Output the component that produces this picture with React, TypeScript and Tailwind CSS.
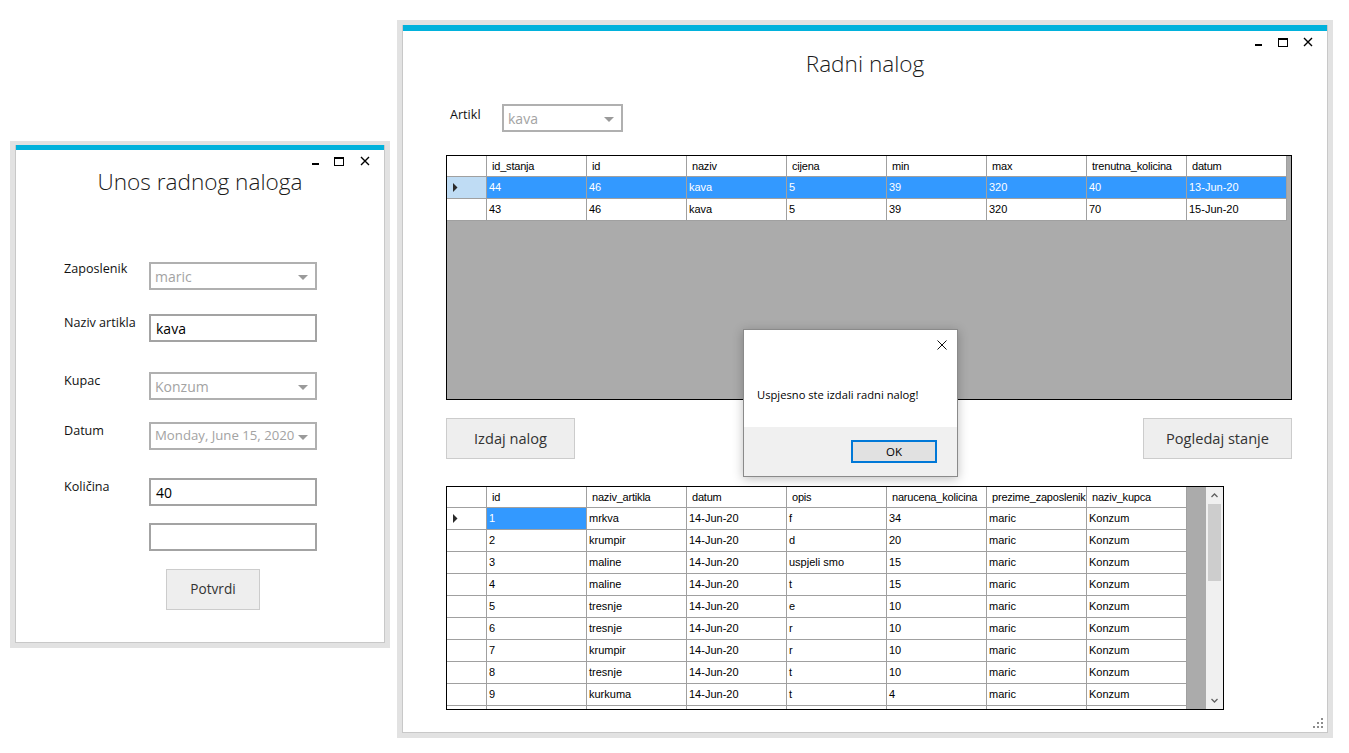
import React from "react";

const ui = "font-['Open_Sans',sans-serif]";
const mono = "font-['Liberation_Sans',Arial,sans-serif]";

function WinControls({ gapA, gapB }: { gapA: string; gapB: string }) {
  return (
    <div className="flex h-[10px] items-end justify-end pr-[14px]">
      <div className="mb-[1px] h-[2px] w-[7px] bg-black" />
      <div className={`h-[9px] w-[10px] border border-t-2 border-black ${gapA}`} />
      <svg className={gapB} width="10" height="10" viewBox="0 0 10 10">
        <path d="M1 1 L9 9 M9 1 L1 9" stroke="#000" strokeWidth="1.4" />
      </svg>
    </div>
  );
}

function Arrow() {
  return (
    <svg width="10" height="5" viewBox="0 0 10 5" className="absolute right-[7px] top-[11px]">
      <polygon points="0,0 10,0 5,5" fill="#9a9a9a" />
    </svg>
  );
}

function Combo({ text, size }: { text: string; size: string }) {
  return (
    <div className={`relative flex items-center overflow-hidden whitespace-nowrap border-2 border-[#b0b0b0] bg-white pl-[4px] text-[#a3a3a3] ${size}`}>
      {text}
      <Arrow />
    </div>
  );
}

function TextBox({ text }: { text?: string }) {
  return (
    <div className="flex h-[28px] w-[168px] items-center border-2 border-[#a3a3a3] bg-white pl-[5px] text-[14px] text-black">
      {text}
    </div>
  );
}

function Row({ label, labelPos, gap, children }: { label: string; labelPos: string; gap: string; children: React.ReactNode }) {
  return (
    <div className={`flex items-start pl-[48px] ${gap}`}>
      <div className={`w-[85px] text-[12.6px] leading-[18px] text-[#111] ${labelPos}`}>{label}</div>
      {children}
    </div>
  );
}

function Triangle() {
  return (
    <svg width="5" height="9" viewBox="0 0 5 9">
      <polygon points="0,0 4.5,4.5 0,9" fill="#2a2a2a" />
    </svg>
  );
}

type GridProps = {
  columns: string[];
  data: string[][];
  selectedRow?: number;
  selectedCell?: number;
  size: string;
  scroll?: boolean;
};

function Grid({ columns, data, selectedRow, selectedCell, size, scroll }: GridProps) {
  return (
    <div className={`flex overflow-hidden border border-black bg-[#ababab] text-[11px] ${mono} ${size}`}>
      <div className="flex flex-col">
        <div className="flex h-[21px] shrink-0">
          <div className="w-[40px] border-r border-b border-[#a0a0a0] bg-white" />
          {columns.map((c) => (
            <div key={c} className="flex w-[100px] items-center whitespace-nowrap border-r border-b border-[#a0a0a0] bg-white pl-[5px] tracking-[-0.2px] text-black">
              {c}
            </div>
          ))}
        </div>
        {data.map((row, i) => (
          <div key={i} className="flex h-[22px] shrink-0">
            <div className={`flex w-[40px] items-center border-r border-b border-[#a0a0a0] pl-[6px] ${i === selectedRow ? "bg-[#bfdcf4]" : "bg-white"}`}>
              {i === 0 && <Triangle />}
            </div>
            {row.map((v, j) => {
              const sel = i === selectedRow || (i === 0 && j === selectedCell);
              return (
                <div
                  key={j}
                  className={`flex w-[100px] items-center whitespace-nowrap border-r border-b border-[#a0a0a0] pl-[2px] ${sel ? "bg-[#3399ff] text-white" : "bg-white text-black"}`}
                >
                  {v}
                </div>
              );
            })}
          </div>
        ))}
      </div>
      {scroll && (
        <div className="ml-auto flex w-[17px] shrink-0 flex-col bg-[#f0f0f0]">
          <div className="flex h-[17px] items-center justify-center">
            <svg width="7" height="5" viewBox="0 0 7 5">
              <path d="M0.5 4 L3.5 1 L6.5 4" stroke="#606060" strokeWidth="1.3" fill="none" />
            </svg>
          </div>
          <div className="flex-1 px-[2px]">
            <div className="h-[77px] bg-[#cdcdcd]" />
          </div>
          <div className="flex h-[17px] items-center justify-center">
            <svg width="7" height="5" viewBox="0 0 7 5">
              <path d="M0.5 1 L3.5 4 L6.5 1" stroke="#606060" strokeWidth="1.3" fill="none" />
            </svg>
          </div>
        </div>
      )}
    </div>
  );
}

const upperCols = ["id_stanja", "id", "naziv", "cijena", "min", "max", "trenutna_kolicina", "datum"];
const upperData = [
  ["44", "46", "kava", "5", "39", "320", "40", "13-Jun-20"],
  ["43", "46", "kava", "5", "39", "320", "70", "15-Jun-20"],
];

const lowerCols = ["id", "naziv_artikla", "datum", "opis", "narucena_kolicina", "prezime_zaposlenik", "naziv_kupca"];
const lowerData = [
  ["1", "mrkva", "14-Jun-20", "f", "34", "maric", "Konzum"],
  ["2", "krumpir", "14-Jun-20", "d", "20", "maric", "Konzum"],
  ["3", "maline", "14-Jun-20", "uspjeli smo", "15", "maric", "Konzum"],
  ["4", "maline", "14-Jun-20", "t", "15", "maric", "Konzum"],
  ["5", "tresnje", "14-Jun-20", "e", "10", "maric", "Konzum"],
  ["6", "tresnje", "14-Jun-20", "r", "10", "maric", "Konzum"],
  ["7", "krumpir", "14-Jun-20", "r", "10", "maric", "Konzum"],
  ["8", "tresnje", "14-Jun-20", "t", "10", "maric", "Konzum"],
  ["9", "kurkuma", "14-Jun-20", "t", "4", "maric", "Konzum"],
  ["", "", "", "", "", "", ""],
];

function LeftWindow() {
  return (
    <div className="absolute left-[10px] top-[141px] h-[507px] w-[380px] bg-[#e2e2e2] px-[5px] pt-[4px] pb-[5px]">
      <div className="flex h-full flex-col border-x border-b border-[#c8c8c8] bg-white">
        <div className="h-[5px] bg-[#01b2dc]" />
        <div className="mt-[6px]">
          <WinControls gapA="ml-[15px]" gapB="ml-[16px]" />
        </div>
        <div className="text-center text-[22.6px] font-light leading-[32px] text-[#1a1a1a]">Unos radnog naloga</div>
        <Row label="Zaposlenik" labelPos="-mt-[2px]" gap="mt-[64px]">
          <Combo text="maric" size="h-[28px] w-[168px] text-[14px]" />
        </Row>
        <Row label="Naziv artikla" labelPos="mt-0" gap="mt-[24px]">
          <TextBox text="kava" />
        </Row>
        <Row label="Kupac" labelPos="mt-0" gap="mt-[30px]">
          <Combo text="Konzum" size="h-[28px] w-[168px] text-[14px]" />
        </Row>
        <Row label="Datum" labelPos="mt-0" gap="mt-[22px]">
          <Combo text="Monday, June 15, 2020" size="h-[28px] w-[168px] text-[13.2px]" />
        </Row>
        <Row label="Količina" labelPos="mt-0" gap="mt-[28px]">
          <TextBox text="40" />
        </Row>
        <Row label="" labelPos="mt-0" gap="mt-[17px]">
          <TextBox />
        </Row>
        <div className="ml-[150px] mt-[18px] flex h-[41px] w-[94px] items-center justify-center border border-[#cccccc] bg-[#eeeeee] text-[13.6px] text-[#333]">
          Potvrdi
        </div>
      </div>
    </div>
  );
}

function RightWindow() {
  return (
    <div className="absolute left-[397px] top-[20px] h-[718px] w-[936px] bg-[#e2e2e2] p-[5px]">
      <div className="relative flex h-full flex-col border-x border-b border-[#c8c8c8] bg-white">
        <div className="h-[6px] bg-[#01b2dc]" />
        <div className="mt-[6px]">
          <WinControls gapA="ml-[16px]" gapB="ml-[15px]" />
        </div>
        <div className="mt-[1px] text-center text-[22.6px] font-light leading-[32px] text-[#1a1a1a]">Radni nalog</div>
        <div className="ml-[47px] mt-[24px] flex items-start">
          <div className="mt-[2px] w-[52px] text-[12.6px] leading-[18px] text-[#111]">Artikl</div>
          <Combo text="kava" size="h-[28px] w-[121px] text-[14px]" />
        </div>
        <div className="ml-[43px] mt-[23px]">
          <Grid columns={upperCols} data={upperData} selectedRow={0} size="h-[245px] w-[846px]" />
        </div>
        <div className="ml-[43px] mr-[35px] mt-[18px] flex justify-between">
          <div className="flex h-[41px] w-[129px] items-center justify-center border border-[#cccccc] bg-[#eeeeee] text-[14.6px] text-[#333]">
            Izdaj nalog
          </div>
          <div className="flex h-[41px] w-[149px] items-center justify-center border border-[#cccccc] bg-[#eeeeee] text-[14.6px] text-[#333]">
            Pogledaj stanje
          </div>
        </div>
        <div className="ml-[43px] mt-[27px]">
          <Grid columns={lowerCols} data={lowerData} selectedCell={0} size="h-[224px] w-[778px]" scroll />
        </div>
        <svg className="absolute bottom-[4px] right-[4px]" width="10" height="10" viewBox="0 0 10 10">
          <rect x="8" y="0" width="2" height="2" fill="#8c8c8c" />
          <rect x="4" y="4" width="2" height="2" fill="#8c8c8c" />
          <rect x="8" y="4" width="2" height="2" fill="#8c8c8c" />
          <rect x="0" y="8" width="2" height="2" fill="#8c8c8c" />
          <rect x="4" y="8" width="2" height="2" fill="#8c8c8c" />
          <rect x="8" y="8" width="2" height="2" fill="#8c8c8c" />
        </svg>
      </div>
    </div>
  );
}

function MessageBox() {
  return (
    <div className="absolute left-[743px] top-[329px] flex h-[148px] w-[215px] flex-col border border-[#8a8a8a] bg-white shadow-[0_2px_10px_rgba(0,0,0,0.25)]">
      <div className="h-[97px]">
        <div className="flex justify-end pr-[10px] pt-[10px]">
          <svg width="10" height="10" viewBox="0 0 10 10">
            <path d="M0.5 0.5 L9.5 9.5 M9.5 0.5 L0.5 9.5" stroke="#111" strokeWidth="1" />
          </svg>
        </div>
        <div className="mt-[37px] pl-[13px] text-[11.2px] leading-[16px] text-black">Uspjesno ste izdali radni nalog!</div>
      </div>
      <div className="flex flex-1 justify-end bg-[#f0f0f0] pr-[20px] pt-[13px]">
        <div className="flex h-[23px] w-[86px] items-center justify-center border-2 border-[#0078d7] bg-[#e1e1e1] text-[11.5px] text-black">
          OK
        </div>
      </div>
    </div>
  );
}

export default function App() {
  return (
    <div className={`relative h-[753px] w-[1349px] overflow-hidden bg-white ${ui}`}>
      <LeftWindow />
      <RightWindow />
      <MessageBox />
    </div>
  );
}
